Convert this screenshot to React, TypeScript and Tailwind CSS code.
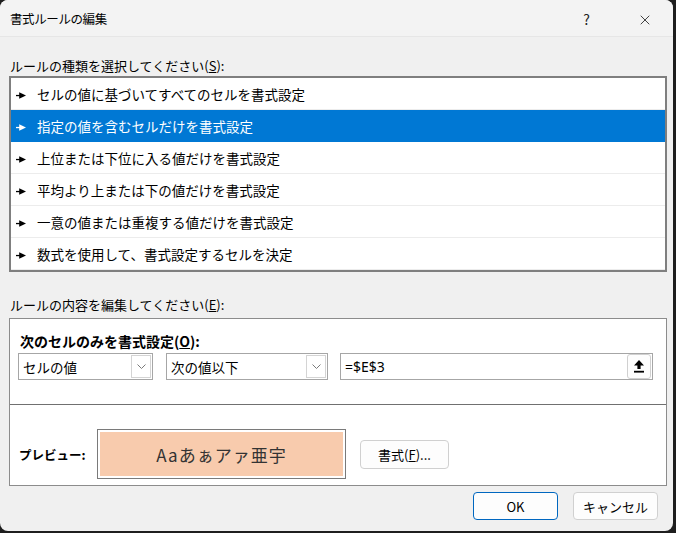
import { X } from 'lucide-react';

const RULE_TYPES = [
  'セルの値に基づいてすべてのセルを書式設定',
  '指定の値を含むセルだけを書式設定',
  '上位または下位に入る値だけを書式設定',
  '平均より上または下の値だけを書式設定',
  '一意の値または重複する値だけを書式設定',
  '数式を使用して、書式設定するセルを決定',
];

const font = "font-['Noto_Sans_CJK_JP','Noto_Sans',sans-serif]";

function Pointer({ light }: { light?: boolean }) {
  return (
    <svg width="10" height="7" viewBox="0 0 10 7" className="shrink-0 mt-[1px]">
      <rect x="0" y="2.9" width="4" height="1.3" fill={light ? '#fff' : '#000'} />
      <polygon points="3.2,0.3 10,3.5 3.2,6.7" fill={light ? '#fff' : '#000'} />
    </svg>
  );
}

function Chevron() {
  return (
    <svg width="9" height="5" viewBox="0 0 9 5">
      <path d="M0.5 0.5 L4.5 4.5 L8.5 0.5" fill="none" stroke="#7a7a7a" strokeWidth="1" />
    </svg>
  );
}

function Combo({ value, width }: { value: string; width: string }) {
  return (
    <div className={`${width} h-[27px] flex items-center border border-[#a6a6a6] bg-white pl-[4px] pr-[1px]`}>
      <span className="flex-1 text-[13.5px] text-black pt-[2px]">{value}</span>
      <div className="w-[20px] h-[23px] border border-[#d4d4d4] flex items-center justify-center">
        <Chevron />
      </div>
    </div>
  );
}

function UploadIcon() {
  return (
    <svg width="10" height="13" viewBox="0 0 10 13">
      <polygon points="5,0 10,5.5 6.6,5.5 6.6,9 3.4,9 3.4,5.5 0,5.5" fill="#000" />
      <rect x="0" y="10.8" width="10" height="1.8" fill="#000" />
    </svg>
  );
}

export default function App() {
  return (
    <div className={`w-[676px] h-[533px] bg-[#1e1e1e] ${font}`}>
      <div className="w-[673px] h-[531px] rounded-[8px] bg-[#f0f0f0] overflow-hidden flex flex-col">
        {/* title bar */}
        <div className="h-[37px] flex items-center pl-[10px] pt-[3px] bg-[#f3f3f3] border-b border-[#e6e6e6]">
          <span className="text-[12.5px] tracking-[-0.4px] text-black flex-1">書式ルールの編集</span>
          <span className="text-[14px] text-[#222] mr-[47px]">?</span>
          <X size={16} strokeWidth={1.1} className="text-black mr-[20px]" />
        </div>

        <div className="px-[9px]">
          <div className="mt-[19px] h-[18px] leading-[18px] pt-[1px] text-[13px] text-black pl-[1px]">
            ルールの種類を選択してください(<span className="underline">S</span>):
          </div>

          {/* rule type list */}
          <div className="mt-[2px] w-[658px] border-2 border-[#7f7f7f] bg-white">
            {RULE_TYPES.map((t, i) => {
              const selected = i === 1;
              return (
                <div
                  key={t}
                  className={
                    selected
                      ? 'h-[32px] flex items-center gap-[11px] pl-[5px] pt-[2px] bg-[#0078d4] border-b border-[#0078d4] text-white'
                      : 'h-[32px] flex items-center gap-[11px] pl-[5px] pt-[2px] border-b border-[#ececec] text-black'
                  }
                >
                  <Pointer light={selected} />
                  <span className="text-[13.5px]">{t}</span>
                </div>
              );
            })}
          </div>

          <div className="mt-[23px] h-[18px] leading-[18px] pt-[1px] text-[13px] text-black pl-[1px]">
            ルールの内容を編集してください(<span className="underline">E</span>):
          </div>

          {/* rule description */}
          <div className="mt-[5px] w-[658px] h-[168px] border border-[#8c8c8c] bg-white flex flex-col">
            <div className="h-[86px] border-b border-[#707070] pl-[8px] pt-[11px]">
              <div className="h-[20px] leading-[20px] pt-[1px] text-[14px] font-bold text-black pl-[2px]">
                次のセルのみを書式設定(<span className="underline">O</span>):
              </div>
              <div className="mt-[3px] flex gap-[13px]">
                <Combo value="セルの値" width="w-[135px]" />
                <Combo value="次の値以下" width="w-[162px]" />
                <div className="w-[313px] h-[27px] flex items-center border border-[#a6a6a6] bg-white pl-[4px] pr-[1px] ml-[-1px]">
                  <span className="flex-1 text-[14px] font-['Noto_Sans',sans-serif] text-black">=$E$3</span>
                  <div className="w-[24px] h-[25px] rounded-[3px] border border-[#d0d0d0] bg-[#fdfdfd] flex items-center justify-center">
                    <UploadIcon />
                  </div>
                </div>
              </div>
            </div>

            <div className="flex items-center pl-[9px] pt-[24px]">
              <span className="w-[78px] text-[12.5px] font-bold text-black pt-[2px]">プレビュー:</span>
              <div className="w-[249px] h-[50px] border border-[#7a7a7a] p-[2px]">
                <div className="w-full h-full bg-[#f8cbad] flex items-center justify-center pt-[2px] text-[17px] tracking-[1px] text-[#333]">
                  Aaあぁアァ亜宇
                </div>
              </div>
              <button className="ml-[14px] w-[89px] h-[29px] pt-[2px] rounded-[4px] border border-[#d0d0d0] bg-[#fdfdfd] text-[13px] text-black">
                書式(<span className="underline">F</span>)...
              </button>
            </div>
          </div>

          <div className="mt-[6px] flex justify-end gap-[15px] pr-[6px]">
            <button className="w-[85px] h-[28px] pt-[1px] rounded-[4px] border border-[#0067c0] bg-[#fdfdfd] text-[13px] text-black">
              OK
            </button>
            <button className="w-[85px] h-[28px] pt-[1px] rounded-[4px] border border-[#d0d0d0] bg-[#fdfdfd] text-[13px] text-black">
              キャンセル
            </button>
          </div>
        </div>
      </div>
    </div>
  );
}
